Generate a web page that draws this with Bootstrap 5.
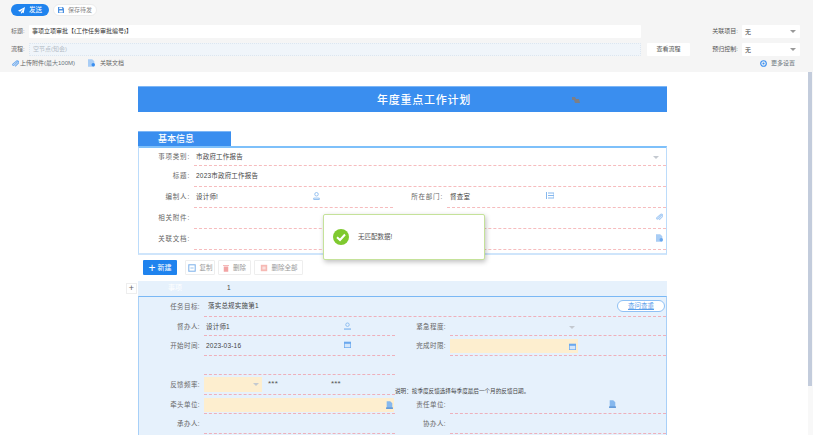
<!DOCTYPE html>
<html lang="zh">
<head>
<meta charset="UTF-8">
<title>年度重点工作计划</title>
<link href="https://cdn.jsdelivr.net/npm/bootstrap@5.3.2/dist/css/bootstrap.min.css" rel="stylesheet">
<style>
html,body{height:435px;overflow:hidden}
body{font-family:"Liberation Sans","Noto Sans CJK SC",sans-serif;font-size:6.5px;line-height:10px;color:#555;background:#fff}
.top-bar{height:72px;background:#f5f5f5;padding:4px 0 0 11px}
.send-btn{width:38px;height:12px;padding:0;border:0;border-radius:6px;background:#1f83ee;color:#fff;font-size:6.5px;line-height:12px}
.save-btn{width:44px;height:12px;margin-left:4px;padding:0;border:1px solid #ececec;border-radius:6px;background:#fff;color:#888;font-size:6px;line-height:10px}
.form-line{height:13px;margin-top:5px}
.first-line{margin-top:9px}
.top-label{width:18px;flex:none;font-size:6px;line-height:13px;color:#666}
.top-input{width:612px;flex:none;height:13px;background:#fff;font-size:6px;line-height:13px;padding-left:3px;color:#333;border-radius:1px}
.flow-input{background:#f0f5fa;border:1px dotted #dce6f0;color:#b4bcc6;line-height:11px}
.flow-btn{width:43px;flex:none;height:13px;margin-left:6px;padding:0;border:0;border-radius:1px;background:#fff;color:#555;font-size:6px;line-height:13px}
.flow-space{width:49px;flex:none}
.side-label{width:27px;flex:none;margin-left:21px;font-size:6px;line-height:13px;color:#555;text-align:right;white-space:nowrap}
.side-pick{width:58px;flex:none;height:13px;padding-left:3px;background:#fff;line-height:14px;font-size:6px;color:#444;border-radius:1px}
.caret{width:0;height:0;border-left:3px solid transparent;border-right:3px solid transparent;border-top:3px solid #999;display:block;flex:none}
.soft-caret{border-top-color:#c4c9d0}
.pick-caret{margin-right:4px}
.attach-line{margin-top:1px;width:784px;padding-left:1px;font-size:6px;color:#666;height:12px;line-height:12px}
.attach-line svg{margin-right:1px}
.doc-link{margin-left:13px}
.doc-page{width:529px;margin-left:138px;padding-top:14px}
.doc-title{height:26px;background:#3a8eef;border-top:1px solid #7db6f6;color:#fff;font-size:11px;line-height:26px;letter-spacing:.75px;text-align:center;font-weight:500;position:relative;padding-left:43px}
.title-mark{position:absolute;left:434px;top:10px;display:block}
.sect-tab{margin-top:19px;width:93px;height:15px;background:#3a8eef;border-top:1px solid #7db6f6;color:#fff;font-size:9px;line-height:14px;padding-left:20px;font-weight:500}
.base-box{height:109px;border:1px solid #bcdcfb;border-top:2px solid #7ec0fa;border-bottom:2px solid #cfe5fb}
.field-row{height:21px}
.field-row:first-child{height:18px}
.field-name{width:51px;flex:none;text-align:right;color:#666;letter-spacing:.8px;padding-top:5px}
.field-row:first-child .field-name,.field-row:first-child .field-val{padding-top:4px}
.field-val{flex:1;margin-left:4px;height:100%;border-bottom:1px dashed #f6bcbe;color:#444;padding:5px 3px 0 2px;letter-spacing:.2px}
.half{flex:none;width:199px}
.right-name{width:50px}
.right-val{padding-left:3px}
.person-text{width:117px;flex:none}
.dept-text{width:96px;flex:none}
.action-bar{height:15px;margin:5px 0 6px 5px;gap:3px}
.new-btn{width:34px;height:15px;margin-right:5px;padding:0;border:0;border-radius:1px;background:#1f83ee;color:#fff;font-size:7px;line-height:15px}
.plus-sign{font-size:12px;line-height:1;vertical-align:middle}
.plain-btn{height:15px;padding:0;border:1px solid #eee;border-radius:1px;background:#fff;color:#999;font-size:6.5px;line-height:13px}
.copy-btn{width:30px}
.del-btn{width:33px}
.del-all-btn{width:49px}
.tab-wrap{position:relative}
.plus-box{position:absolute;left:-12px;top:2px;width:11px;height:11px;border:1px solid #eee;background:#fff;color:#666;font-size:9px;line-height:9px;text-align:center}
.tab-line{height:15px;background:#e6f1fc}
.tab-name{margin-left:30px;width:20px;color:#fff;font-size:7px;line-height:14px}
.tab-num{margin-left:39px;color:#444;line-height:14px}
.task-box{height:139px;background:#e6f1fc;border-left:1px solid #a8d0f8;border-right:1px solid #a8d0f8;border-top:1px solid #7ab8f5}
.task-row{height:19.5px}
.task-name{width:61px;flex:none;text-align:right;color:#666;letter-spacing:.4px;padding-top:5px}
.task-val{height:100%;border-bottom:1px dashed #eeb0bb;margin-left:4px;color:#444;letter-spacing:.2px}
.val-text{padding:5px 0 0 2px}
.task-left{flex:none;width:191px}
.task-full{flex:1}
.task-right-name{width:51px;flex:none;text-align:right;color:#666;letter-spacing:.4px;padding-top:5px}
.task-text{width:138px;flex:none}
.warm-fill{background:#fdeecf;height:15px}
.warm-date{width:128px;height:14px;padding-right:2px;margin-top:3px}
.warm-short{width:58px;padding-right:3px}
.warm-long{width:190px;height:14px;padding-right:1px;margin-top:3px}
.stars{color:#555;font-size:8px;margin-left:6px}
.stars-next{margin-left:53px}
.note-text{font-size:5.600px;white-space:nowrap;color:#444;position:relative;top:11px}
.query-btn{width:48px;height:12px;padding:0;margin-right:1px;border:1px solid #8fc1f5;border-radius:6px;background:#fff;color:#5a9eea;font-size:6.5px;line-height:10px;text-decoration:underline}
.urgent-caret{margin:9px 0 0 119px}
.org-icon-box{padding:5px 0 0 159px}
.toast-box{position:absolute;left:323px;top:214px;width:162px;height:46px;background:#fff;border:1px solid #c5e29a;border-radius:2px;box-shadow:1px 2px 5px rgba(0,0,0,.25);padding-left:9px;gap:9px;color:#555;font-size:6.5px;z-index:5}
.scroll-track{position:absolute;right:0;top:72px;width:5px;height:363px;background:#f8f8f8;z-index:6}
.scroll-thumb{width:4px;height:314px;background:#c3ccdc}
</style>
</head>
<body>
<div class="top-bar">
  <div class="d-flex align-items-center">
    <button class="btn send-btn d-flex align-items-center justify-content-center gap-1"><svg width="7" height="7" viewBox="0 0 10 10"><path d="M10 0 0 5.500l3 1.200L8 2.500 4.200 7.400V10l1.800-2 2 1z" fill="#fff"/></svg>发送</button>
    <button class="btn save-btn d-flex align-items-center justify-content-center gap-1"><svg width="6" height="6" viewBox="0 0 10 10"><path d="M0 0h8l2 2v8H0z" fill="#4a90e2"/><path d="M2 1h5v2.500H2zM2 6h6v3H2z" fill="#fff"/></svg>保存待发</button>
  </div>
  <div class="d-flex form-line first-line">
    <span class="top-label">标题:</span>
    <div class="top-input">事项立项审批【{工作任务审批编号}】</div>
    <span class="flow-space"></span>
    <span class="side-label">关联项目:</span>
    <div class="side-pick d-flex justify-content-between align-items-center ms-1"><span>无</span><i class="caret pick-caret"></i></div>
  </div>
  <div class="d-flex form-line">
    <span class="top-label">流程:</span>
    <div class="top-input flow-input">空节点(知会)</div>
    <button class="btn flow-btn">查看流程</button>
    <span class="side-label">预归控制:</span>
    <div class="side-pick d-flex justify-content-between align-items-center ms-1"><span>无</span><i class="caret pick-caret"></i></div>
  </div>
  <div class="d-flex justify-content-between attach-line">
    <div class="d-flex align-items-center">
      <svg width="7" height="7" viewBox="0 0 10 10"><path d="M8.500 2 3 7.500a1.200 1.200 0 0 1-1.700-1.700L7 1a2.200 2.200 0 0 1 2.500 3L4.500 9" fill="none" stroke="#6aa8ee" stroke-width="1.500"/></svg>
      <span>上传附件<span class="text-secondary">(最大100M)</span></span>
      <svg class="doc-link" width="7" height="8" viewBox="0 0 10 11"><path d="M0 0h6l3 3v8H0z" fill="#a9cdf5"/><circle cx="7.500" cy="8" r="2.500" fill="#3a8eef"/></svg>
      <span class="ms-1">关联文档</span>
    </div>
    <div class="d-flex align-items-center text-secondary">
      <svg class="me-1" width="7" height="7" viewBox="0 0 10 10"><circle cx="5" cy="5" r="4" fill="none" stroke="#3a8eef" stroke-width="1.600"/><circle cx="5" cy="5" r="1.500" fill="#3a8eef"/></svg>
      <span>更多设置</span>
    </div>
  </div>
</div>

<div class="doc-page">
  <div class="doc-title">年度重点工作计划
    <svg class="title-mark" width="8" height="6" viewBox="0 0 8 6"><path d="M0 0h3l1 2h3l1 4H3L2 3H0z" fill="#7d7f86"/></svg>
  </div>
  <div class="sect-tab">基本信息</div>
  <div class="base-box">
    <div class="d-flex field-row">
      <span class="field-name">事项类别:</span>
      <div class="field-val d-flex justify-content-between"><span>市政府工作报告</span><i class="caret soft-caret mt-1 me-1"></i></div>
    </div>
    <div class="d-flex field-row">
      <span class="field-name">标题:</span>
      <div class="field-val">2023市政府工作报告</div>
    </div>
    <div class="d-flex field-row">
      <span class="field-name">编制人:</span>
      <div class="field-val half d-flex">
        <span class="person-text">设计师!</span>
        <svg width="7" height="8" viewBox="0 0 10 11"><circle cx="5" cy="3" r="2.500" fill="none" stroke="#86b8ee" stroke-width="1.200"/><path d="M1 10.500V8.500h8v2z" fill="none" stroke="#86b8ee" stroke-width="1.200"/></svg>
      </div>
      <span class="field-name right-name">所在部门:</span>
      <div class="field-val right-val d-flex">
        <span class="dept-text">督查室</span>
        <svg width="8" height="7" viewBox="0 0 8 7"><path d="M.5 0v7M2 1h6v5H2M2 3.500h6" fill="none" stroke="#86b8ee"/></svg>
      </div>
    </div>
    <div class="d-flex field-row">
      <span class="field-name">相关附件:</span>
      <div class="field-val d-flex justify-content-end">
        <svg width="7" height="8" viewBox="0 0 10 10"><path d="M8.500 2 3 7.500a1.200 1.200 0 0 1-1.700-1.700L7 1a2.200 2.200 0 0 1 2.500 3L4.500 9" fill="none" stroke="#a9cdf5" stroke-width="1.600"/></svg>
      </div>
    </div>
    <div class="d-flex field-row">
      <span class="field-name">关联文档:</span>
      <div class="field-val d-flex justify-content-end">
        <svg width="7" height="8" viewBox="0 0 10 11"><path d="M0 0h6l3 3v8H0z" fill="#a9cdf5"/><circle cx="7.500" cy="8" r="2.500" fill="#6aa8ee"/></svg>
      </div>
    </div>
  </div>

  <div class="d-flex action-bar">
    <button class="btn new-btn"><span class="plus-sign">+</span> 新建</button>
    <button class="btn plain-btn copy-btn d-flex align-items-center justify-content-center gap-1"><svg width="8" height="8" viewBox="0 0 10 10"><rect x="1" y="1" width="8" height="8" fill="none" stroke="#7fb2ea" stroke-width="1.300"/><path d="M3 5h4" stroke="#7fb2ea"/></svg>复制</button>
    <button class="btn plain-btn del-btn d-flex align-items-center justify-content-center gap-1"><svg width="6" height="8" viewBox="0 0 8 10"><path d="M0 1h8v1H0zM1 3h6v7H1z" fill="#f2a4a4"/></svg>删除</button>
    <button class="btn plain-btn del-all-btn d-flex align-items-center justify-content-center gap-1"><svg width="8" height="8" viewBox="0 0 10 10"><rect x="1" y="1" width="8" height="8" fill="#f6b9b4"/><path d="M3 4h4M3 6h4" stroke="#fff"/></svg>删除全部</button>
  </div>

  <div class="tab-wrap">
    <span class="plus-box">+</span>
    <div class="d-flex tab-line">
      <span class="tab-name">事项</span>
      <span class="tab-num">1</span>
    </div>
  </div>

  <div class="task-box">
    <div class="d-flex task-row">
      <span class="task-name">任务目标:</span>
      <div class="task-val task-full d-flex justify-content-between align-items-center ps-0">
        <span class="ms-1">落实总规实施第1</span>
        <button class="btn query-btn">查问查重</button>
      </div>
    </div>
    <div class="d-flex task-row">
      <span class="task-name">督办人:</span>
      <div class="task-val val-text task-left d-flex">
        <span class="task-text">设计师1</span>
        <svg width="7" height="8" viewBox="0 0 8 8"><circle cx="4" cy="2.500" r="2" fill="none" stroke="#86b8ee"/><path d="M0 7.500h8" stroke="#86b8ee" stroke-width="1.500"/></svg>
      </div>
      <span class="task-right-name">紧急程度:</span>
      <div class="task-val task-full d-flex"><i class="caret soft-caret urgent-caret"></i></div>
    </div>
    <div class="d-flex task-row">
      <span class="task-name">开始时间:</span>
      <div class="task-val val-text task-left d-flex">
        <span class="task-text">2023-03-16</span>
        <svg width="7" height="7" viewBox="0 0 10 10"><rect y="1" width="10" height="9" fill="#6aa8ee"/><path d="M1 4h8v5H1z" fill="#d4e6fa"/></svg>
      </div>
      <span class="task-right-name">完成时限:</span>
      <div class="task-val task-full">
        <div class="warm-fill warm-date d-flex justify-content-end align-items-center">
          <svg width="7" height="7" viewBox="0 0 10 10"><rect y="1" width="10" height="9" fill="#6aa8ee"/><path d="M1 4h8v5H1z" fill="#d4e6fa"/></svg>
        </div>
      </div>
    </div>
    <div class="d-flex task-row">
      <span class="task-name"></span>
      <div class="task-val task-left"></div>
    </div>
    <div class="d-flex task-row">
      <span class="task-name">反馈频率:</span>
      <div class="task-val task-left d-flex align-items-center">
        <div class="warm-fill warm-short d-flex justify-content-end align-items-center"><i class="caret soft-caret"></i></div>
        <span class="stars">***</span>
        <span class="stars stars-next">***</span>
      </div>
      <span class="note-text">说明：按季度反馈选择每季度最后一个月的反馈日期。</span>
    </div>
    <div class="d-flex task-row">
      <span class="task-name">牵头单位:</span>
      <div class="task-val task-left">
        <div class="warm-fill warm-long d-flex justify-content-end align-items-center">
          <svg width="7" height="8" viewBox="0 0 10 11"><path d="M1 0h5l3 3v8H1z" fill="#86b8ee"/><path d="M0 9h10v2H0z" fill="#5c94d6"/></svg>
        </div>
      </div>
      <span class="task-right-name">责任单位:</span>
      <div class="task-val task-full org-icon-box">
        <svg class="d-block" width="7" height="8" viewBox="0 0 10 11"><path d="M1 0h5l3 3v8H1z" fill="#86b8ee"/><path d="M0 9h10v2H0z" fill="#5c94d6"/></svg>
      </div>
    </div>
    <div class="d-flex task-row">
      <span class="task-name">承办人:</span>
      <div class="task-val task-left"></div>
      <span class="task-right-name">协办人:</span>
      <div class="task-val task-full"></div>
    </div>
  </div>
</div>

<div class="toast-box d-flex align-items-center">
  <svg width="16" height="16" viewBox="0 0 16 16"><circle cx="8" cy="8" r="8" fill="#7fc92f"/><path d="M4 8.300 7 11l5-5.500" fill="none" stroke="#fff" stroke-width="2"/></svg>
  <span>无匹配数据!</span>
</div>
<div class="scroll-track"><div class="scroll-thumb"></div></div>
<script src="https://cdn.jsdelivr.net/npm/bootstrap@5.3.2/dist/js/bootstrap.bundle.min.js"></script>
</body>
</html>
